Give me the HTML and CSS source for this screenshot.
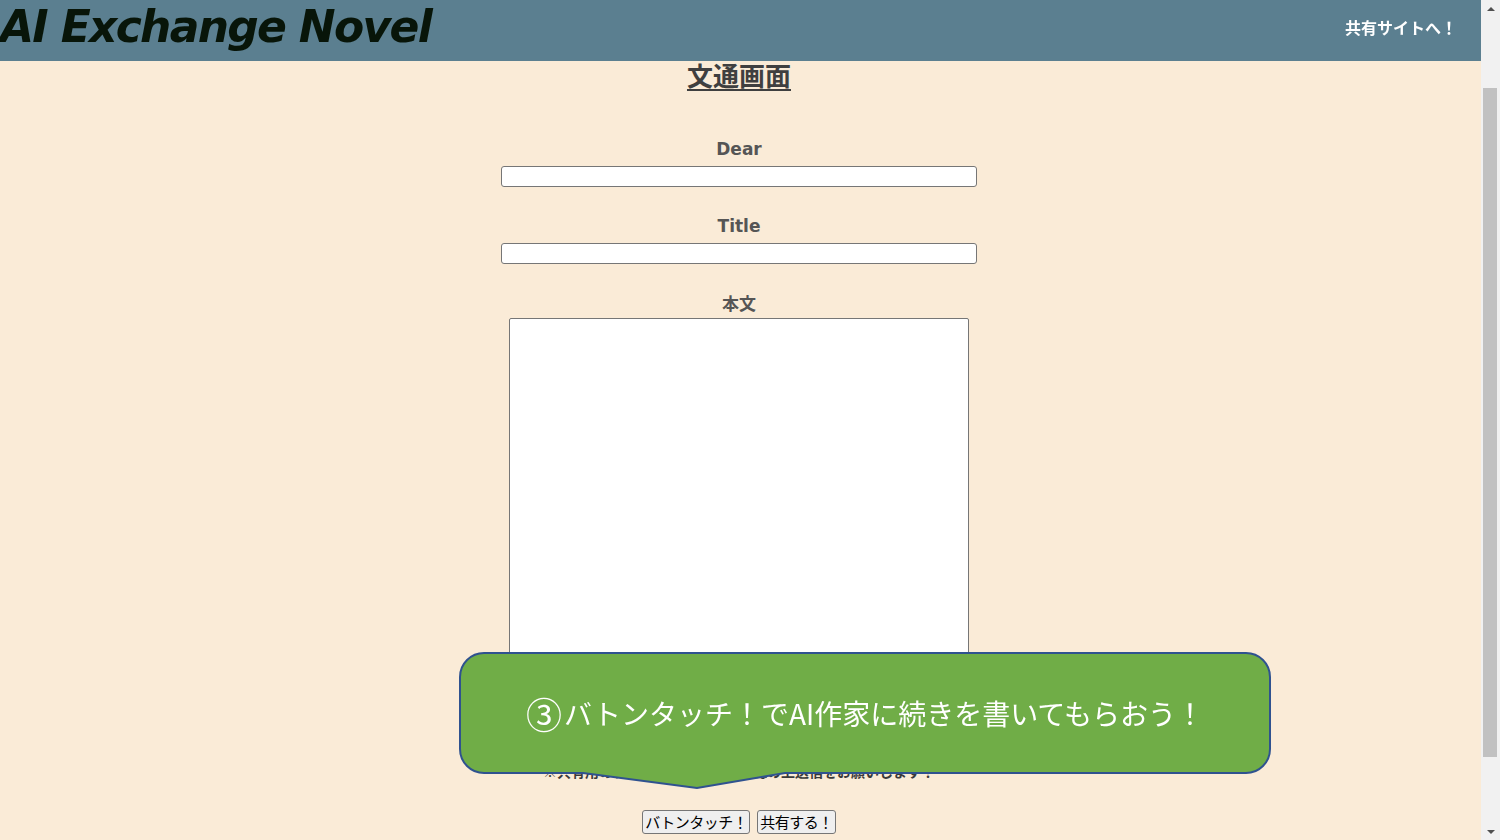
FILE: index.html
```html
<!DOCTYPE html>
<html lang="ja">
<head>
<meta charset="utf-8">
<title>AI Exchange Novel</title>
<link rel="stylesheet" href="styles.css">
</head>
<body>
<header class="site-header">
  <h1 class="site-title">AI Exchange Novel</h1>
  <a class="share-link" href="#">共有サイトへ！</a>
</header>

<main class="letter">
  <h2 class="letter-heading">文通画面</h2>
  <form class="letter-form">
    <label class="field-label latin" for="dear">Dear</label>
    <input class="text-input" id="dear" type="text">
    <label class="field-label latin" for="title">Title</label>
    <input class="text-input" id="title" type="text">
    <label class="field-label" for="body">本文</label>
    <textarea class="body-input" id="body"></textarea>
    <p class="note">※共有用のタイトル・本文をご確認の上送信をお願いします！</p>
    <div class="actions">
      <button class="btn" type="button">バトンタッチ！</button>
      <button class="btn" type="button">共有する！</button>
    </div>
  </form>
</main>

<div class="scrollbar" aria-hidden="true">
  <span class="sb-arrow sb-up"></span>
  <span class="sb-track"><span class="sb-thumb"></span></span>
  <span class="sb-arrow sb-down"></span>
</div>

<div class="callout">
  <svg class="callout-shape" width="814" height="140" viewBox="0 0 814 140">
    <path d="M25,1 H787 A24 24 0 0 1 811 25 V97 A24 24 0 0 1 787 121 H326 L238 136 L124 121 H25 A24 24 0 0 1 1 97 V25 A24 24 0 0 1 25 1 Z" fill="#70ad47" stroke="#2f528f" stroke-width="2"/>
  </svg>
  <p class="callout-text"><span class="step-num">③</span>バトンタッチ！でAI作家に続きを書いてもらおう！</p>
</div>
<script src="script.js"></script>
</body>
</html>
```

FILE: styles.css
```css
html {
  background: #faebd7;
}
body {
  margin: 0;
  font-family: "Noto Sans CJK JP", "Noto Sans", sans-serif;
  color: #444;
}

.site-header {
  position: fixed;
  top: 0;
  left: 0;
  right: 19px;
  height: 61px;
  background: #5b7f90;
  display: flex;
  justify-content: space-between;
  align-items: flex-start;
  z-index: 5;
}
.site-title {
  margin: 5px 0 0 0;
  font-family: "DejaVu Sans", sans-serif;
  font-weight: bold;
  font-style: italic;
  font-size: 44px;
  line-height: 44px;
  letter-spacing: -1.7px;
  color: #081509;
}
.share-link {
  margin: 15px 24px 0 0;
  font-size: 16px;
  line-height: 24px;
  font-weight: bold;
  color: #fff;
  text-decoration: none;
}

.scrollbar {
  position: fixed;
  top: 0;
  right: 0;
  width: 19px;
  height: 100%;
  background: #f1f1f1;
  display: flex;
  flex-direction: column;
  z-index: 6;
}
.sb-arrow {
  height: 17px;
  display: flex;
  align-items: center;
  justify-content: center;
}
.sb-arrow::before {
  content: "";
  width: 0;
  height: 0;
  border-left: 4px solid transparent;
  border-right: 4px solid transparent;
}
.sb-up::before {
  border-bottom: 4px solid #505050;
}
.sb-down::before {
  border-top: 4px solid #505050;
}
.sb-track {
  flex: 1;
  display: flex;
  flex-direction: column;
  padding: 71px 3px 0 2px;
}
.sb-thumb {
  height: 669px;
  background: #c1c1c1;
}

.letter {
  box-sizing: border-box;
  width: calc(100% - 19px);
  padding: 148px 3px 92px 0;
  display: flex;
  flex-direction: column;
  align-items: center;
}
.letter-heading {
  margin: 0;
  font-size: 26px;
  line-height: 32px;
  font-weight: bold;
  color: #3f3f3f;
  text-decoration: underline;
  text-decoration-thickness: 2px;
  text-underline-offset: 3px;
}
.letter-form {
  margin-top: 46px;
  display: flex;
  flex-direction: column;
  align-items: center;
}
.field-label {
  font-size: 17px;
  line-height: 24px;
  font-weight: bold;
  color: #555;
}
.field-label.latin {
  font-family: "DejaVu Sans", "Noto Sans CJK JP", sans-serif;
  font-size: 17px;
}
.text-input {
  box-sizing: border-box;
  width: 476px;
  height: 21px;
  margin: 5px 0 27px;
  border: 1px solid #767676;
  border-radius: 3px;
  background: #fff;
  padding: 1px 2px;
}
.body-input {
  box-sizing: border-box;
  width: 460px;
  height: 420px;
  margin-top: 3px;
  border: 1px solid #767676;
  border-radius: 2px;
  background: #fff;
}
.note {
  margin: 22px 0 0;
  font-size: 14px;
  line-height: 22px;
  font-weight: bold;
  color: #3a3a3a;
}
.actions {
  margin-top: 28px;
  display: flex;
  gap: 7px;
}
.btn {
  font-family: "Noto Sans CJK JP", sans-serif;
  font-size: 15px;
  letter-spacing: -0.5px;
  line-height: 20px;
  height: 24px;
  padding: 1px 2px;
  background: #efefef;
  border: 1px solid #767676;
  border-radius: 3px;
  color: #000;
}

.callout {
  position: fixed;
  left: 459px;
  top: 652px;
  width: 814px;
  height: 140px;
  z-index: 10;
}
.callout-shape {
  display: block;
}
.callout-text {
  position: absolute;
  left: 0;
  top: 0;
  width: 812px;
  height: 122px;
  margin: 0;
  display: flex;
  align-items: center;
  justify-content: center;
  font-size: 28px;
  color: #fff;
  font-family: "Noto Sans CJK JP", sans-serif;
}
.step-num {
  font-size: 36px;
  line-height: 36px;
  margin-right: 2px;
}
```

FILE: script.js
```js
window.addEventListener('load', function () {
  window.scrollTo(0, 89);
});
window.scrollTo(0, 89);
```
